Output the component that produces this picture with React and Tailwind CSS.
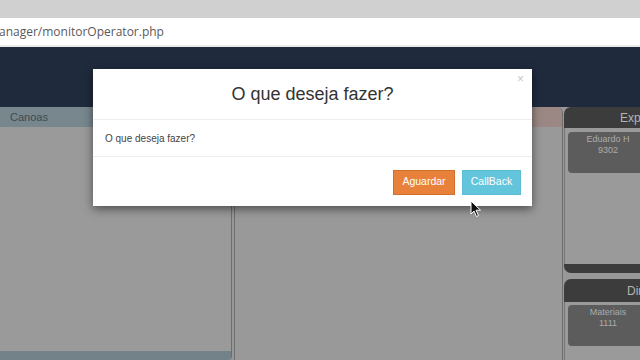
const font = { fontFamily: '"Liberation Sans", Arial, sans-serif' };

const Cursor = () => (
    <svg className="absolute left-[470px] top-[200px]" width="12" height="18" viewBox="0 0 12 18">
        <path d="M1 1 L1 14 L4 11 L6.5 16.5 L8.5 15.6 L6 10.2 L10.5 10.2 Z" fill="#111" stroke="#fff" strokeWidth="1" strokeLinejoin="round" />
    </svg>
);

const Card = ({ name, number }) => (
    <div className="w-[80px] h-[41px] rounded-[4px] bg-[#5c5c5c] flex flex-col items-center pt-[2px] text-[9px] leading-[11px] text-[#ababab]">
        <span>{name}</span>
        <span>{number}</span>
    </div>
);

export default function App() {
    return (
        <div className="w-[640px] h-[360px] overflow-hidden relative bg-[#989898]" style={font}>
            {/* browser chrome */}
            <div className="h-[18px] bg-[#d0d0d0]" />
            <div className="h-[29px] bg-white border-b-2 border-[#ebebeb] flex items-center">
                <span className="text-[12px] text-[#5a5a5a] -ml-[1px]" style={{ fontFamily: '"Open Sans", "Noto Sans", sans-serif' }}>
                    anager/monitorOperator.php
                </span>
            </div>

            {/* app header */}
            <div className="h-[60px] bg-[#1f2a3d]" />

            {/* panels */}
            <div className="flex h-[253px]">
                <div className="w-[232px] shrink-0 flex flex-col border-r border-[#6e6e6e] rounded-br-[4px] bg-[#9a9a9a]">
                    <div className="h-[20px] bg-[#77878d] flex items-center pl-[10px] text-[11px] text-[#3c4b52]">Canoas</div>
                    <div className="flex-1" />
                    <div className="h-[9px] bg-[#738188] rounded-br-[4px]" />
                </div>

                <div className="w-[329px] shrink-0 ml-[2px] border-x border-[#6e6e6e] rounded-tr-[6px] flex flex-col bg-[#999999]">
                    <div className="h-[20px] bg-[#9b8884] rounded-tr-[6px]" />
                    <div className="flex-1" />
                </div>

                <div className="w-[170px] shrink-0 ml-[1px] flex flex-col gap-[6px]">
                    <div className="h-[166px] rounded-[7px] bg-[#3c3c3c] flex flex-col">
                        <div className="h-[21px] flex items-center pl-[56px] text-[12px] text-[#b4b4b4] whitespace-nowrap">Expedição</div>
                        <div className="flex-1 bg-[#9a9a9a] border-l border-[#777] px-[3px] pt-[4px]">
                            <Card name="Eduardo H" number="9302" />
                        </div>
                        <div className="h-[9px]" />
                    </div>
                    <div className="flex-1 rounded-t-[7px] bg-[#3c3c3c] flex flex-col">
                        <div className="h-[23px] flex items-center pl-[63px] text-[12px] text-[#b4b4b4] whitespace-nowrap">Diretoria</div>
                        <div className="flex-1 bg-[#9a9a9a] border-l border-[#777] px-[3px] pt-[3px]">
                            <Card name="Materiais" number="1111" />
                        </div>
                    </div>
                </div>
            </div>

            {/* modal */}
            <div className="absolute left-[93px] top-[69px] w-[439px] h-[137px] bg-white shadow-[0_3px_9px_rgba(0,0,0,0.5)] flex flex-col">
                <div className="relative h-[51px] border-b border-[#eeeeee] flex items-center justify-center">
                    <span className="text-[18px] text-[#333333] mt-[1px]">O que deseja fazer?</span>
                    <span className="absolute right-[8px] top-[1px] text-[12px] text-[#c8c8c8]">×</span>
                </div>
                <div className="h-[37px] border-b border-[#eeeeee] flex items-center px-[12px] text-[10px] text-[#444444]">
                    O que deseja fazer?
                </div>
                <div className="flex-1 flex items-center justify-end gap-[7px] pr-[11px] pt-[1px]">
                    <button className="w-[62px] h-[25px] bg-[#e8823a] border border-[#d0702c] text-white text-[10.5px]">Aguardar</button>
                    <button className="w-[59px] h-[25px] bg-[#62c5dc] border border-[#5bbcd3] text-white text-[10.5px]">CallBack</button>
                </div>
            </div>

            <Cursor />
        </div>
    );
}
